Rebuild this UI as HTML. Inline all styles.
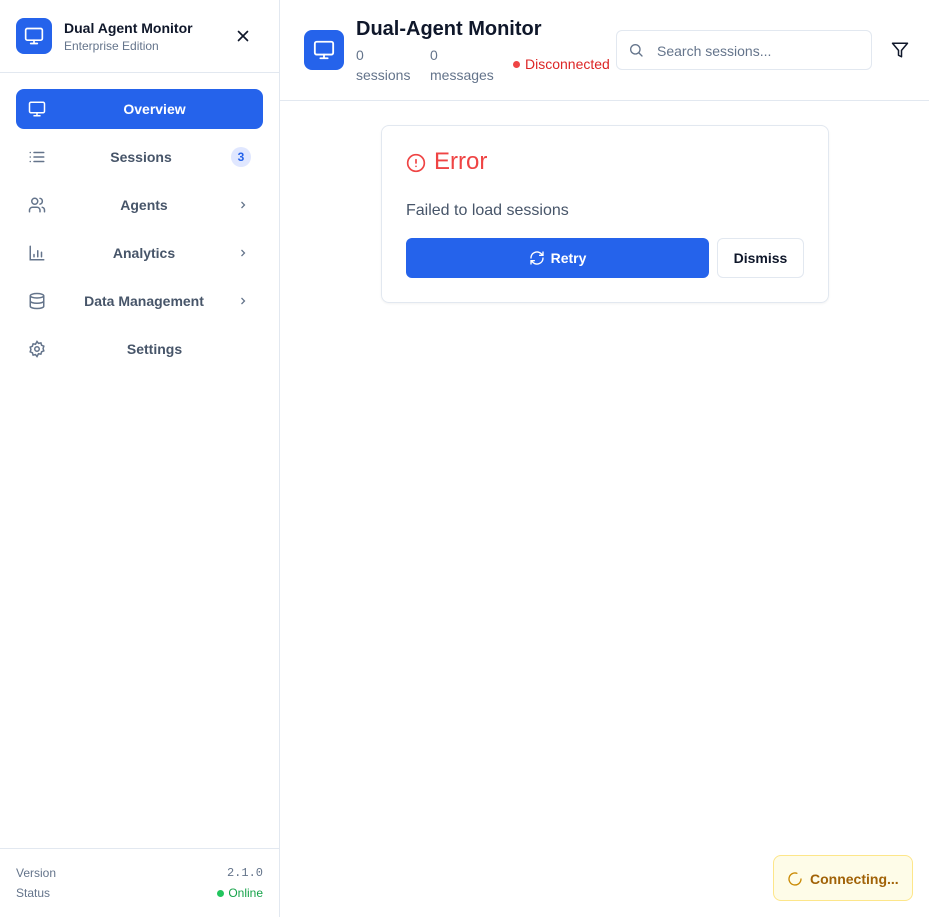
<!DOCTYPE html>
<html><head><meta charset="utf-8"><style>
*{box-sizing:border-box;margin:0;padding:0}
body{width:929px;height:917px;font-family:"Liberation Sans",sans-serif;background:#fff;position:relative;overflow:hidden;color:#0f172a}
.side{position:absolute;left:0;top:0;width:280px;height:917px;border-right:1px solid #e2e8f0}
.logo{position:absolute;left:16px;top:18px;width:36px;height:36px;border-radius:8px;background:#2563eb;display:flex;align-items:center;justify-content:center}
.t1{position:absolute;left:64px;top:20px;font-size:14px;font-weight:bold}
.t2{position:absolute;left:64px;top:39px;font-size:12px;color:#64748b}
.x{position:absolute;left:234px;top:27px}
.hr1{position:absolute;left:0;top:72px;width:279px;border-top:1px solid #e2e8f0}
.nav{position:absolute;left:16px;width:247px;height:40px;border-radius:8px;font-size:14px;font-weight:bold;color:#475569}
.nav svg.ic{position:absolute;left:12px;top:11px}
.nav .lbl{position:absolute;top:12px;left:30px;right:0;text-align:center}
.nav.act{background:#2563eb;color:#fff}
.chev{position:absolute;right:14px;top:14px}
.badge{position:absolute;right:12px;top:10px;width:20px;height:20px;border-radius:10px;background:#e0e7ff;color:#2563eb;font-size:12px;text-align:center;line-height:20px}
.foot{position:absolute;left:0;top:848px;width:279px;border-top:1px solid #e2e8f0;font-size:12px;color:#64748b}
.hdr{position:absolute;left:280px;top:0;right:0;height:101px;border-bottom:1px solid #e2e8f0}
.card{position:absolute;left:381px;top:125px;width:448px;height:178px;border:1px solid #e2e8f0;border-radius:8px;box-shadow:0 1px 2px rgba(0,0,0,.05)}
</style></head><body>
<div class="side">
<div class="logo"><svg width="20" height="20" viewBox="0 0 24 24" fill="none" stroke="#fff" stroke-width="2" stroke-linecap="round"><rect x="2" y="3" width="20" height="14" rx="2"/><path d="M8 21h8M12 17v4"/></svg></div>
<div class="t1">Dual Agent Monitor</div>
<div class="t2">Enterprise Edition</div>
<svg class="x" width="18" height="18" viewBox="0 0 24 24" fill="none" stroke="#0f172a" stroke-width="2.2" stroke-linecap="round"><path d="M6 6l12 12M18 6L6 18"/></svg>
<div class="hr1"></div>
<div class="nav act" style="top:89px"><svg class="ic" width="18" height="18" viewBox="0 0 24 24" fill="none" stroke="#fff" stroke-width="2" stroke-linecap="round"><rect x="2" y="3" width="20" height="14" rx="2"/><path d="M8 21h8M12 17v4"/></svg><div class="lbl">Overview</div></div>
<div class="nav" style="top:137px"><svg class="ic" width="18" height="18" viewBox="0 0 24 24" fill="none" stroke="#64748b" stroke-width="2" stroke-linecap="round"><path d="M8 6h13M8 12h13M8 18h13M3 6h.01M3 12h.01M3 18h.01"/></svg><div class="lbl" style="right:27px">Sessions</div><div class="badge">3</div></div>
<div class="nav" style="top:185px"><svg class="ic" width="18" height="18" viewBox="0 0 24 24" fill="none" stroke="#64748b" stroke-width="2" stroke-linecap="round"><path d="M16 21v-2a4 4 0 0 0-4-4H6a4 4 0 0 0-4 4v2"/><circle cx="9" cy="7" r="4"/><path d="M22 21v-2a4 4 0 0 0-3-3.9M16 3.1a4 4 0 0 1 0 7.8"/></svg><div class="lbl" style="right:21px">Agents</div><svg class="chev" width="12" height="12" viewBox="0 0 24 24" fill="none" stroke="#64748b" stroke-width="2.5"><path d="M9 6l6 6-6 6"/></svg></div>
<div class="nav" style="top:233px"><svg class="ic" width="18" height="18" viewBox="0 0 24 24" fill="none" stroke="#64748b" stroke-width="2" stroke-linecap="round"><path d="M3 3v18h18M8 17v-3M13 17V9M18 17v-6"/></svg><div class="lbl" style="right:21px">Analytics</div><svg class="chev" width="12" height="12" viewBox="0 0 24 24" fill="none" stroke="#64748b" stroke-width="2.5"><path d="M9 6l6 6-6 6"/></svg></div>
<div class="nav" style="top:281px"><svg class="ic" width="18" height="18" viewBox="0 0 24 24" fill="none" stroke="#64748b" stroke-width="2"><ellipse cx="12" cy="5" rx="9" ry="3"/><path d="M3 5v14c0 1.7 4 3 9 3s9-1.3 9-3V5M3 12c0 1.7 4 3 9 3s9-1.3 9-3"/></svg><div class="lbl" style="right:21px">Data Management</div><svg class="chev" width="12" height="12" viewBox="0 0 24 24" fill="none" stroke="#64748b" stroke-width="2.5"><path d="M9 6l6 6-6 6"/></svg></div>
<div class="nav" style="top:329px"><svg class="ic" width="18" height="18" viewBox="0 0 24 24" fill="none" stroke="#64748b" stroke-width="2"><circle cx="12" cy="12" r="3"/><path d="M12 2l2 2.5 3.2-.6.9 3.1 3 1.3-1 3.1 1 3.1-3 1.3-.9 3.1-3.2-.6L12 22l-2-2.5-3.2.6-.9-3.1-3-1.3 1-3.1-1-3.1 3-1.3.9-3.1 3.2.6z"/></svg><div class="lbl">Settings</div></div>
<div class="foot">
<div style="position:absolute;left:16px;top:17px">Version</div>
<div style="position:absolute;right:16px;top:17px;font-family:'Liberation Mono',monospace">2.1.0</div>
<div style="position:absolute;left:16px;top:37px">Status</div>
<div style="position:absolute;right:16px;top:37px;color:#16a34a"><span style="display:inline-block;width:7px;height:7px;border-radius:50%;background:#22c55e;margin-right:4px"></span>Online</div>
</div>
</div>
<div class="hdr">
<div class="logo" style="left:24px;top:30px;width:40px;height:40px"><svg width="22" height="22" viewBox="0 0 24 24" fill="none" stroke="#fff" stroke-width="2" stroke-linecap="round"><rect x="2" y="3" width="20" height="14" rx="2"/><path d="M8 21h8M12 17v4"/></svg></div>
<div style="position:absolute;left:76px;top:18px;font-size:20px;font-weight:bold">Dual-Agent Monitor</div>
<div style="position:absolute;left:76px;top:45px;font-size:14px;color:#64748b;line-height:20px">0<br>sessions</div>
<div style="position:absolute;left:150px;top:45px;font-size:14px;color:#64748b;line-height:20px">0<br>messages</div>
<div style="position:absolute;left:233px;top:55px;font-size:14px;color:#dc2626;line-height:18px"><span style="display:inline-block;width:7px;height:7px;border-radius:50%;background:#ef4444;margin-right:5px;vertical-align:1px"></span>Disconnected</div>
<div style="position:absolute;left:336px;top:30px;width:256px;height:40px;border:1px solid #e2e8f0;border-radius:6px;background:#fff">
<svg style="position:absolute;left:11px;top:11px" width="16" height="16" viewBox="0 0 24 24" fill="none" stroke="#64748b" stroke-width="2" stroke-linecap="round"><circle cx="11" cy="11" r="7"/><path d="M21 21l-4.3-4.3"/></svg>
<div style="position:absolute;left:40px;top:12px;font-size:14px;color:#64748b">Search sessions...</div></div>
<svg style="position:absolute;left:611px;top:41px" width="18" height="18" viewBox="0 0 24 24" fill="none" stroke="#0f172a" stroke-width="2" stroke-linejoin="round"><path d="M22 3H2l8 9.5V19l4 2v-8.5z"/></svg>
</div>
<div class="card">
<svg style="position:absolute;left:24px;top:27px" width="20" height="20" viewBox="0 0 24 24" fill="none" stroke="#ef4444" stroke-width="2" stroke-linecap="round"><circle cx="12" cy="12" r="10"/><path d="M12 8v4M12 16h.01"/></svg>
<div style="position:absolute;left:52px;top:22px;font-size:24px;color:#ef4444">Error</div>
<div style="position:absolute;left:24px;top:76px;font-size:16px;color:#475569">Failed to load sessions</div>
<div style="position:absolute;left:24px;top:112px;width:303px;height:40px;border-radius:6px;background:#2563eb;color:#fff;font-size:14px;font-weight:bold;text-align:center;line-height:40px"><svg style="vertical-align:-3px;margin-right:6px" width="16" height="16" viewBox="0 0 24 24" fill="none" stroke="#fff" stroke-width="2" stroke-linecap="round"><path d="M3 12a9 9 0 0 1 15-6.7L21 8M21 3v5h-5M21 12a9 9 0 0 1-15 6.7L3 16M3 21v-5h5"/></svg>Retry</div>
<div style="position:absolute;left:335px;top:112px;width:87px;height:40px;border-radius:6px;border:1px solid #e2e8f0;font-size:14px;font-weight:bold;text-align:center;line-height:38px">Dismiss</div>
</div>
<div style="position:absolute;left:773px;top:855px;width:140px;height:46px;border:1px solid #fde68a;background:#fefce8;border-radius:8px;color:#a16207;font-size:14px;font-weight:bold">
<svg style="position:absolute;left:13px;top:15px" width="16" height="16" viewBox="0 0 24 24" fill="none" stroke="#ca8a04" stroke-width="2" stroke-linecap="round"><path d="M21 12a9 9 0 1 1-6.2-8.6"/></svg>
<div style="position:absolute;left:36px;top:15px">Connecting...</div></div>
</body></html>
